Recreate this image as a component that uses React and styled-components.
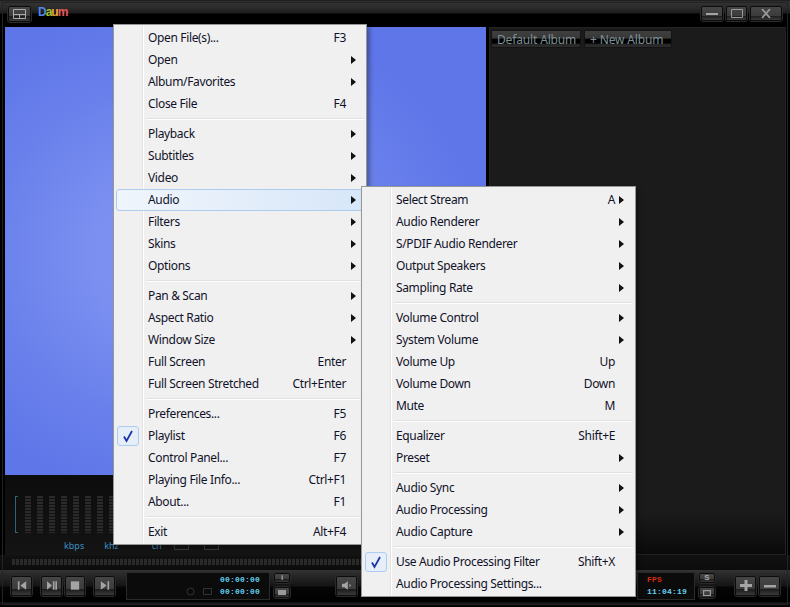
import React from "react";
import styled, { createGlobalStyle } from "styled-components";

const Global = createGlobalStyle`
  html, body { margin: 0; padding: 0; background: #000; }
  * { box-sizing: border-box; }
`;

const Frame = styled.div`
  position: relative; width: 790px; height: 607px; overflow: hidden;
  display: flex; flex-direction: column; background: #000;
  font-family: "Noto Sans", "Open Sans", sans-serif;
  outline: 1px solid #232323; outline-offset: -3px;
`;
const TitleBar = styled.div`
  height: 27px; flex: none; display: flex; align-items: flex-start;
  padding: 6px 8px 0 8px;
  background: linear-gradient(#1a1a1a 0, #333 2px, #2a2a2a 8px, #1c1c1c 13px, #000 14px);
`;
const Logo = styled.div`
  margin: -1px 0 0 7px; font: bold 12px/14px "Liberation Sans", sans-serif; letter-spacing: -1px;
`;
const LogoLetter = styled.span`color: ${p => p.$c};`;
const Spacer = styled.div`flex: 1;`;
const WinButtons = styled.div`display: flex; gap: 3px;`;
const Btn = styled.div`
  width: ${p => p.$w}px; height: ${p => p.$h}px; flex: none;
  display: flex; align-items: center; justify-content: center;
  border: 1px solid #0c0c0c; outline: 1px solid #2a2a2a; outline-offset: 0; border-radius: 2px;
  background: linear-gradient(#464646 0, #3c3c3c 66%, #1c1c1c 68%, #3a3a3a 100%);
  color: #8c8c8c;
`;
const Main = styled.div`height: 528px; flex: none; display: flex; gap: 3px; padding: 0 4px 0 5px;`;
const LeftCol = styled.div`width: 481px; display: flex; flex-direction: column;`;
const Video = styled.div`
  height: 448px; flex: none;
  background: radial-gradient(ellipse 290px 250px at 185px 225px, #8397f2 0%, #7a8ff0 35%, #6a81ec 68%, #5e76e8 100%);
  background-color: #5d75e7;
`;
const Analyzer = styled.div`
  flex: 1; padding: 21px 0 0 10px; display: flex; flex-direction: column;
  background: linear-gradient(#0c0c0c, #141414);
`;
const Spectrum = styled.div`display: flex; height: 37px; align-items: stretch; gap: 6px;`;
const Bracket = styled.div`
  width: 3px; margin-right: 1px; border: 1px solid #2c6478; border-right: none;
`;
const BarCol = styled.div`
  width: 6px;
  background: repeating-linear-gradient(#2a2a2a 0 2px, #141414 2px 3px);
`;
const Readout = styled.div`
  display: flex; margin-top: 7px; height: 12px; font-size: 9px; line-height: 12px; color: #3d8fc0;
`;
const Unit = styled.span`margin-left: ${p => p.$m}px;`;
const TinyBox = styled.span`
  width: 15px; height: 10px; margin-left: ${p => p.$m}px; border: 1px solid #3a3a3a;
`;
const RightPanel = styled.div`
  flex: 1; border: 1px solid #232323; padding: 2px 1px;
  display: flex; gap: 3px; align-items: flex-start;
  background: linear-gradient(#1b1b1b 0, #1b1b1b 92%, #0a0a0a 100%);
`;
const Tab = styled.div`
  width: ${p => p.$w}px; height: 18px; padding-left: 5px;
  font-size: 12px; line-height: 17px; color: #7d9095; white-space: nowrap; letter-spacing: -0.15px;
  border: 1px solid #141414; border-radius: 1px;
  background: linear-gradient(#3f3f3f 0, #383838 45%, #000 50%, #000 75%, #2a2a2a 85%, #2a2a2a 100%);
`;
const SeekRow = styled.div`
  height: 15px; flex: none; padding: 4px 300px 0 12px;
  background: linear-gradient(#111, #0c0c0c);
`;
const SeekTrack = styled.div`
  height: 6px;
  background: repeating-linear-gradient(90deg, #2a2a2a 0 3px, #101010 3px 4px);
`;
const Controls = styled.div`
  height: 31px; flex: none; display: flex; align-items: center; padding: 0 11px 0 11px;
  background: linear-gradient(#343434 0, #2a2a2a 4px, #141414 16px, #050505 17px, #000 100%);
`;
const BottomEdge = styled.div`
  height: 6px; flex: none; background: linear-gradient(#000 0, #000 1px, #222 2px, #111 3px, #000 5px);
`;
const BtnGap = styled.div`width: ${p => p.$w}px; flex: none;`;
const Lcd = styled.div`
  width: ${p => p.$w}px; height: 28px; flex: none; background: #0b0b0b; border: 1px solid #2a2a2a;
  display: flex; flex-direction: column; justify-content: center; padding: 1px 9px;
  align-items: ${p => p.$left ? "flex-start" : "flex-end"};
`;
const LcdRow = styled.div`
  display: flex; align-items: center; gap: 8px; height: 12px;
`;
const Digits = styled.span`
  font: bold 8px/12px "Liberation Mono", monospace; letter-spacing: 0.2px; color: ${p => p.$c || "#63d0f4"};
  white-space: nowrap;
`;
const MiniStack = styled.div`
  width: 16px; flex: none; margin-left: 4px; display: flex; flex-direction: column; gap: 4px;
`;
const MiniBtn = styled(Btn)`
  font: bold 8px/1 "Liberation Sans", sans-serif; color: #aaa;
`;

const Menu = styled.div`
  position: absolute; left: ${p => p.$x}px; top: ${p => p.$y}px; width: ${p => p.$w}px;
  padding: 2px 2px 1px 2px; background: #f0f0f0; border: 1px solid #979797;
  box-shadow: 3px 3px 4px rgba(0,0,0,.3);
  z-index: ${p => p.$z};
  &::before {
    content: ""; position: absolute; left: 28px; top: 1px; bottom: 1px; width: 2px;
    background: linear-gradient(90deg, #e2e3e3 50%, #fff 50%);
  }
`;
const Item = styled.div`
  position: relative; height: 22px; display: flex; align-items: center;
  font-size: 12px; letter-spacing: -0.35px; color: #10122a; white-space: nowrap;
  border-radius: 3px;
  border: 1px solid ${p => p.$hot ? "#aeccee" : "transparent"};
  padding: 0 0 1px 31px;
  background: ${p => p.$hot ? "linear-gradient(90deg, #f0f5fc, #e4eefa 50%, #d6e6f9)" : "transparent"};
`;
const Label = styled.span`flex: 1;`;
const Shortcut = styled.span`position: absolute; right: ${p => p.$r}px;`;
const Arrow = styled.span`
  position: absolute; right: ${p => p.$r}px; width: 0; height: 0;
  border-left: 5px solid #111; border-top: 4px solid transparent; border-bottom: 4px solid transparent;
`;
const Sep = styled.div`
  position: relative; height: 8px; padding: 3px 0 0 30px;
  &::after { content: ""; display: block; height: 2px; background: linear-gradient(#e0e0e0 50%, #fff 50%); }
`;
const CheckBox = styled.div`
  position: absolute; left: 0; top: 0; width: 22px; height: 20px;
  display: flex; align-items: center; justify-content: center;
  background: #e6eefa; border: 1px solid #aeccee; border-radius: 3px;
`;

const mainMenu = [
  ["Open File(s)...", "F3"], ["Open", ">"], ["Album/Favorites", ">"], ["Close File", "F4"], null,
  ["Playback", ">"], ["Subtitles", ">"], ["Video", ">"], ["Audio", ">", "hot"], ["Filters", ">"], ["Skins", ">"], ["Options", ">"], null,
  ["Pan & Scan", ">"], ["Aspect Ratio", ">"], ["Window Size", ">"], ["Full Screen", "Enter"], ["Full Screen Stretched", "Ctrl+Enter"], null,
  ["Preferences...", "F5"], ["Playlist", "F6", "check"], ["Control Panel...", "F7"], ["Playing File Info...", "Ctrl+F1"], ["About...", "F1"], null,
  ["Exit", "Alt+F4"],
];
const subMenu = [
  ["Select Stream", "A>"], ["Audio Renderer", ">"], ["S/PDIF Audio Renderer", ">"], ["Output Speakers", ">"], ["Sampling Rate", ">"], null,
  ["Volume Control", ">"], ["System Volume", ">"], ["Volume Up", "Up"], ["Volume Down", "Down"], ["Mute", "M"], null,
  ["Equalizer", "Shift+E"], ["Preset", ">"], null,
  ["Audio Sync", ">"], ["Audio Processing", ">"], ["Audio Capture", ">"], null,
  ["Use Audio Processing Filter", "Shift+X", "check"], ["Audio Processing Settings...", ""],
];

const Check = () => (
  <svg width="12" height="14" viewBox="0 0 12 14">
    <path d="M2 7.500 L4.500 12 L10 2" fill="none" stroke="#1c34a8" strokeWidth="1.800" />
  </svg>
);

const MenuList = ({ items, x, y, w, z, keyRight, arrowRight }) => (
  <Menu $x={x} $y={y} $w={w} $z={z}>
    {items.map((it, i) => {
      if (!it) return <Sep key={i} />;
      const [label, right, flag] = it;
      const hasArrow = right.endsWith(">");
      const key = right.replace(">", "");
      return (
        <Item key={i} $hot={flag === "hot"}>
          {flag === "check" && <CheckBox><Check /></CheckBox>}
          <Label>{label}</Label>
          {key && <Shortcut $r={keyRight}>{key}</Shortcut>}
          {hasArrow && <Arrow $r={arrowRight} />}
        </Item>
      );
    })}
  </Menu>
);

const Glyph = ({ d, w = 10, h = 9, vb = "0 0 12 10", c = "#a4a4a4" }) => (
  <svg width={w} height={h} viewBox={vb}><path d={d} fill={c} /></svg>
);

const bars = Array.from({ length: 20 });

export default function App() {
  return (
    <Frame>
      <Global />
      <TitleBar>
        <Btn $w={23} $h={16}>
          <svg width="13" height="10" viewBox="0 0 13 10"><path d="M.5.5h12v9H.5zM.5 5.500h12M6.500 5.500v4" fill="none" stroke="#aaa" /></svg>
        </Btn>
        <Logo>
          <LogoLetter $c="#4f86e8">D</LogoLetter>
          <LogoLetter $c="#a6c62a">a</LogoLetter>
          <LogoLetter $c="#e8a838">u</LogoLetter>
          <LogoLetter $c="#e8585c">m</LogoLetter>
        </Logo>
        <Spacer />
        <WinButtons>
          <Btn $w={22} $h={15}><Glyph d="M0 3h12v2H0z" w={12} h={8} vb="0 0 12 8" /></Btn>
          <Btn $w={21} $h={15}>
            <svg width="12" height="9" viewBox="0 0 12 9"><path d="M.5.5h11v8H.5z" fill="none" stroke="#999" /></svg>
          </Btn>
          <Btn $w={32} $h={15}>
            <svg width="10" height="9" viewBox="0 0 10 9"><path d="M1 0l8 9M9 0L1 9" stroke="#999" strokeWidth="1.800" /></svg>
          </Btn>
        </WinButtons>
      </TitleBar>
      <Main>
        <LeftCol>
          <Video />
          <Analyzer>
            <Spectrum>
              <Bracket />
              {bars.map((_, i) => <BarCol key={i} />)}
            </Spectrum>
            <Readout>
              <Unit $m={49}>kbps</Unit>
              <Unit $m={20}>khz</Unit>
              <Unit $m={33}>ch</Unit>
              <TinyBox $m={12} />
              <TinyBox $m={15} />
            </Readout>
          </Analyzer>
        </LeftCol>
        <RightPanel>
          <Tab $w={90}>Default Album</Tab>
          <Tab $w={88}>+ New Album</Tab>
        </RightPanel>
      </Main>
      <SeekRow><SeekTrack /></SeekRow>
      <Controls>
        <Btn $w={21} $h={20}><Glyph d="M1 0h2v10H1zM11 0v10L4 5z" /></Btn>
        <BtnGap $w={9} />
        <Btn $w={21} $h={20}><Glyph d="M0 0v10l6-5zM7 0h2v10H7zM10 0h2v10h-2z" /></Btn>
        <BtnGap $w={3} />
        <Btn $w={20} $h={20}><Glyph d="M1 0h10v10H1z" /></Btn>
        <BtnGap $w={9} />
        <Btn $w={21} $h={20}><Glyph d="M1 0v10l7-5zM9 0h2v10H9z" /></Btn>
        <BtnGap $w={11} />
        <Lcd $w={144}>
          <Digits>00:00:00</Digits>
          <LcdRow>
            <svg width="9" height="9" viewBox="0 0 9 9"><circle cx="4.500" cy="4.500" r="3.500" fill="none" stroke="#333" /></svg>
            <svg width="9" height="7" viewBox="0 0 9 7"><path d="M.5.5h8v6h-8z" fill="none" stroke="#333" /></svg>
            <Digits>00:00:00</Digits>
          </LcdRow>
        </Lcd>
        <MiniStack>
          <MiniBtn $w={16} $h={10}>i</MiniBtn>
          <MiniBtn $w={16} $h={11}><svg width="8" height="5" viewBox="0 0 8 5"><path d="M0 0h8v5H0z" fill="#999" /></svg></MiniBtn>
        </MiniStack>
        <BtnGap $w={46} />
        <Btn $w={21} $h={20}><Glyph d="M0 3h3l4-3v10L3 7H0zM9 3l2 2-2 2z" /></Btn>
        <BtnGap $w={280} />
        <Lcd $w={58} $left>
          <Digits $c="#d82c10">FPS</Digits>
          <Digits>11:04:19</Digits>
        </Lcd>
        <MiniStack>
          <MiniBtn $w={16} $h={10}>S</MiniBtn>
          <MiniBtn $w={16} $h={11}><svg width="8" height="6" viewBox="0 0 8 6"><path d="M.5.5h7v5h-7z" fill="none" stroke="#999" strokeWidth="1.400" /></svg></MiniBtn>
        </MiniStack>
        <BtnGap $w={20} />
        <Btn $w={21} $h={20}><Glyph d="M4.500 0h3v4H12v3H7.500v4h-3V7H0V4h4.500z" w={12} h={11} vb="0 0 12 11" /></Btn>
        <BtnGap $w={3} />
        <Btn $w={21} $h={20}><Glyph d="M0 4h12v2.500H0z" w={12} h={10} /></Btn>
      </Controls>
      <BottomEdge />
      <MenuList items={mainMenu} x={113} y={24} w={254} z={1} keyRight={17} arrowRight={7} />
      <MenuList items={subMenu} x={361} y={186} w={275} z={2} keyRight={17} arrowRight={8} />
    </Frame>
  );
}
